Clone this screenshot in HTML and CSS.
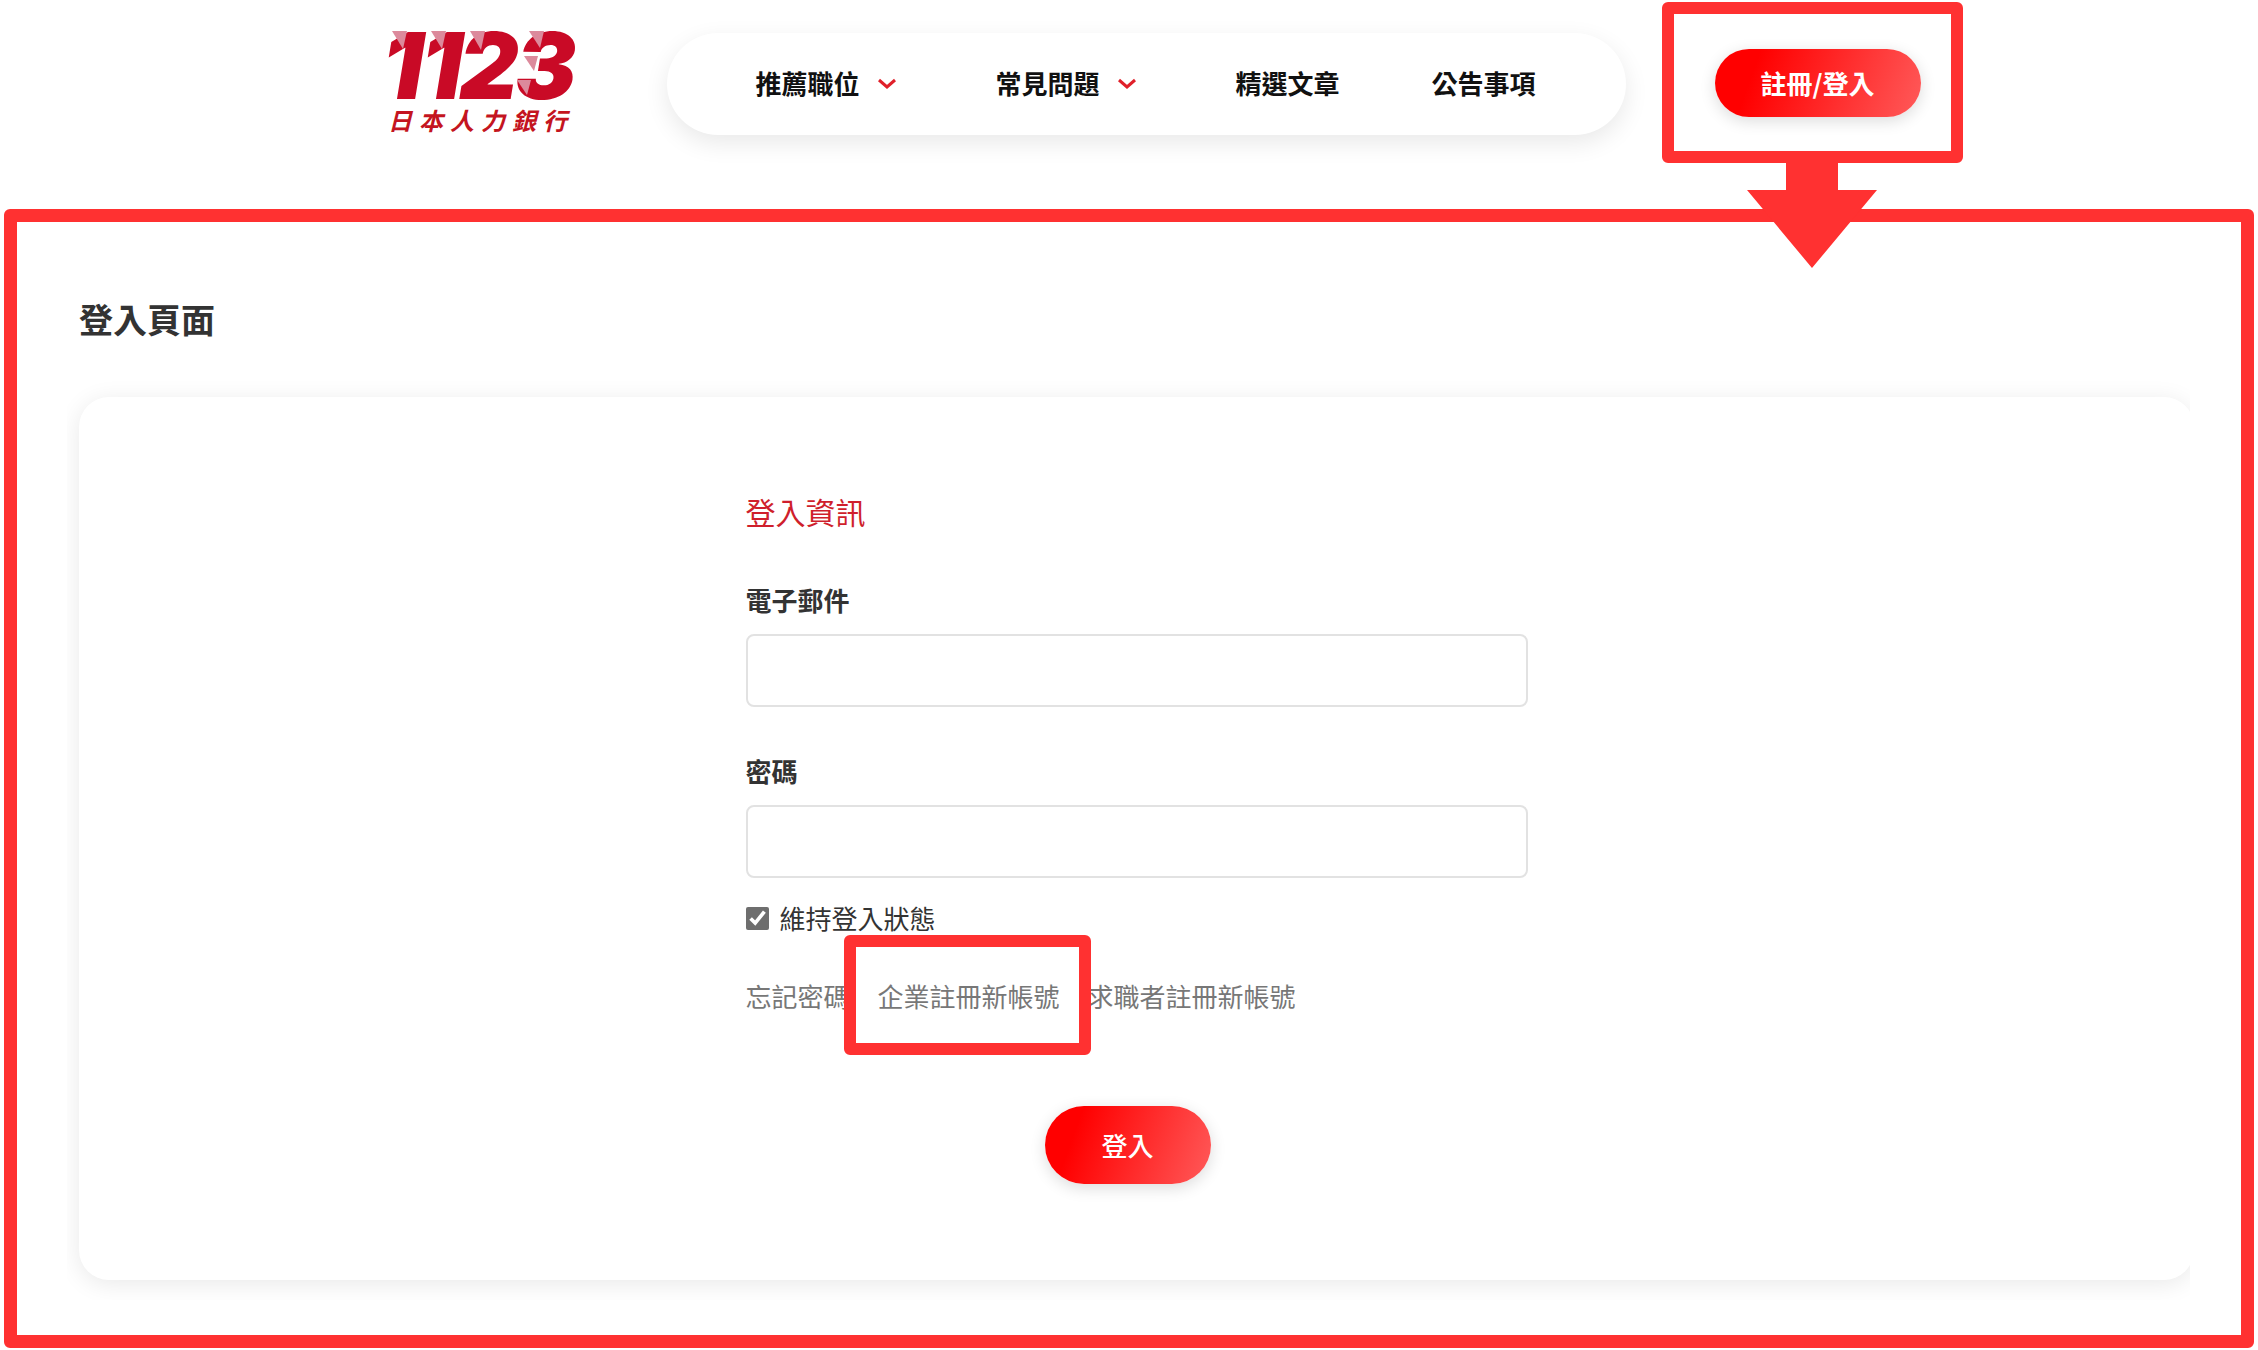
FILE: index.html
```html
<!DOCTYPE html>
<html lang="zh-Hant">
<head>
    <meta charset="UTF-8">
    <meta name="viewport" content="width=device-width, initial-scale=1.0">
    <title>登入頁面 - 1123 日本人力銀行</title>
    <link rel="stylesheet" href="styles.css">
</head>
<body>
    <header class="header">
        <a class="logo" href="#" aria-label="1123 日本人力銀行">
            <svg width="200" height="140" viewBox="0 -20 200 140">
                <text class="logo-number" x="-5 34 72 128" y="73">1123</text>
                <g class="logo-shade">
                    <path d="M5 5h15l-4 18z"/>
                    <path d="M44 5h15l-4 18z"/>
                    <path d="M83 5h15l-4 19z"/>
                    <path d="M142 5h15l-4 17z"/>
                    <path d="M137 30h14l-4 15z"/>
                    <path d="M130 54h14l-4 15z"/>
                </g>
                <text class="logo-name" x="1 32 63 94 125 156" y="104">日本人力銀行</text>
            </svg>
        </a>
        <nav class="nav">
            <a href="#">推薦職位
                <svg width="28" height="20" viewBox="0 0 28 20"><path d="M3 7l8 7 8-7"/></svg>
            </a>
            <a href="#">常見問題
                <svg width="28" height="20" viewBox="0 0 28 20"><path d="M3 7l8 7 8-7"/></svg>
            </a>
            <a href="#">精選文章</a>
            <a href="#">公告事項</a>
        </nav>
        <div class="callout">
            <button class="btn btn-header" type="button">註冊/登入</button>
            <svg class="arrow" width="130" height="106" viewBox="0 0 130 106">
                <path d="M39 0h52v28h39L65 106 0 28h39z"/>
            </svg>
        </div>
    </header>

    <main class="frame">
        <h1>登入頁面</h1>
        <div class="card-clip">
            <form class="card">
                <div class="form-body">
                    <h2>登入資訊</h2>
                    <div class="field">
                        <label for="email">電子郵件</label>
                        <input type="email" id="email">
                    </div>
                    <div class="field">
                        <label for="password">密碼</label>
                        <input type="password" id="password">
                    </div>
                    <div class="remember">
                        <input type="checkbox" id="remember" checked>
                        <label for="remember">維持登入狀態</label>
                    </div>
                    <div class="links">
                        <a href="#">忘記密碼</a>
                        <a class="marked" href="#">企業註冊新帳號</a>
                        <a href="#">求職者註冊新帳號</a>
                    </div>
                    <div class="actions">
                        <button class="btn btn-login" type="submit">登入</button>
                    </div>
                </div>
            </form>
        </div>
    </main>
</body>
</html>
```
FILE: styles.css
```css
* {
    box-sizing: border-box;
}

body {
    margin: 0;
    padding: 2px 4px;
    font-family: 'Noto Sans CJK TC', sans-serif;
    font-size: 26px;
    line-height: 40px;
    color: #333;
    background-color: #fff;
}

a {
    color: inherit;
    text-decoration: none;
}

.header {
    display: flex;
    align-items: flex-start;
    padding-left: 17%;
    margin-bottom: 46px;
}

.logo {
    margin: 4px 80px 0 0;
}

.logo svg {
    display: block;
}

.logo-number {
    font-family: Inter, sans-serif;
    font-size: 92px;
    font-weight: 900;
    font-style: italic;
    fill: #c90a26;
}

.logo-name {
    font-size: 24px;
    font-weight: bold;
    font-style: italic;
    fill: #c41420;
}

.logo-shade {
    fill: #dc8a9c;
}

.nav {
    display: flex;
    align-items: center;
    gap: 92px;
    height: 102px;
    margin: 31px 36px 0 0;
    padding: 0 90px 2px 89px;
    border-radius: 51px;
    background-color: #fff;
    box-shadow: 0 8px 24px rgba(0, 0, 0, 0.09);
    font-weight: bold;
    color: #111;
    white-space: nowrap;
}

.nav a {
    display: flex;
    align-items: center;
    gap: 16px;
}

.nav path {
    fill: none;
    stroke: #e0202a;
    stroke-width: 3;
}

.callout {
    position: relative;
    padding: 35px 30px 34px 41px;
    border: 12px solid #ff3131;
    border-radius: 6px;
}

.arrow {
    position: absolute;
    top: 100%;
    left: 50%;
    margin-left: -65px;
    margin-top: 11px;
    fill: #ff3131;
}

.btn {
    display: block;
    padding: 0;
    border: none;
    border-radius: 39px;
    background: linear-gradient(110deg, #f00 20%, #ff5a5a);
    box-shadow: 0 4px 16px rgba(0, 0, 0, 0.14);
    color: #fff;
    font-family: inherit;
    font-size: 26px;
    line-height: 40px;
    cursor: pointer;
}

.btn-header {
    width: 206px;
    height: 68px;
    font-weight: bold;
}

.btn-login {
    width: 166px;
    height: 78px;
    font-weight: 500;
}

.frame {
    padding: 73px 51px 55px 62px;
    border: 13px solid #ff3131;
    border-radius: 6px;
}

h1 {
    margin: 0 0 54px;
    font-size: 34px;
    line-height: 48px;
    font-weight: bold;
}

/* the card runs slightly past the right edge and is cut there */
.card-clip {
    clip-path: inset(-30px 0 -20px -12px);
}

.card {
    width: calc(100% + 4px);
    padding: 92px 0 96px;
    border-radius: 30px;
    background-color: #fff;
    box-shadow: 0 4px 24px rgba(0, 0, 0, 0.09);
}

.form-body {
    max-width: 782px;
    margin: 0 auto;
}

h2 {
    margin: 0 0 47px;
    font-size: 30px;
    line-height: 44px;
    font-weight: normal;
    color: #cf1f2c;
}

.field {
    margin-bottom: 44px;
}

.field label {
    display: block;
    margin-bottom: 14px;
    font-weight: bold;
}

.field input {
    display: block;
    width: 100%;
    height: 73px;
    padding: 0 16px;
    border: 2px solid #e2e2e2;
    border-radius: 8px;
    background-color: #fff;
    font-family: inherit;
    font-size: 26px;
}

.remember {
    display: flex;
    align-items: center;
    gap: 11px;
    margin-top: -24px;
}

.remember input {
    width: 23px;
    height: 23px;
    margin: 0;
    accent-color: #6e6e6e;
}

.links {
    display: flex;
    gap: 28px;
    margin-top: 38px;
    color: #777;
}

.marked {
    position: relative;
}

.marked::after {
    content: "";
    position: absolute;
    inset: -41px -31px -39px -34px;
    border: 12px solid #ff3131;
    border-radius: 6px;
}

.actions {
    display: flex;
    justify-content: center;
    margin-top: 90px;
    padding-right: 18px;
}
```
